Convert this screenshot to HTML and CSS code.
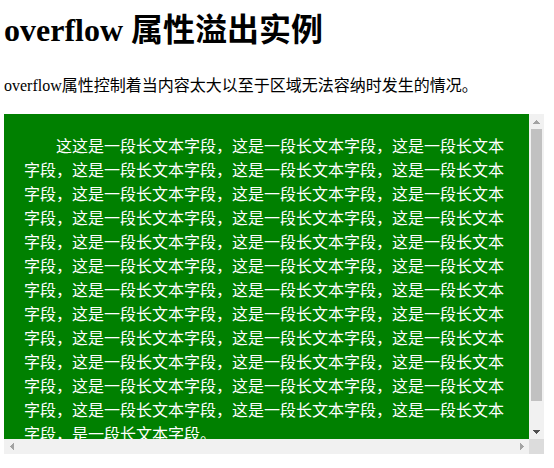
FILE: index.html
```html
<!DOCTYPE html>
<html lang="zh">
<head>
<meta charset="utf-8">
<title>overflow 属性溢出实例</title>
<link rel="stylesheet" href="styles.css">
</head>
<body>
<h1 class="title">overflow 属性溢出实例</h1>
<p class="intro">overflow属性控制着当内容太大以至于区域无法容纳时发生的情况。</p>
<div class="scroll-frame">
  <div class="scroll-content">这这是一段长文本字段，这是一段长文本字段，这是一段长文本字段，这是一段长文本字段，这是一段长文本字段，这是一段长文本字段，这是一段长文本字段，这是一段长文本字段，这是一段长文本字段，这是一段长文本字段，这是一段长文本字段，这是一段长文本字段，这是一段长文本字段，这是一段长文本字段，这是一段长文本字段，这是一段长文本字段，这是一段长文本字段，这是一段长文本字段，这是一段长文本字段，这是一段长文本字段，这是一段长文本字段，这是一段长文本字段，这是一段长文本字段，这是一段长文本字段，这是一段长文本字段，这是一段长文本字段，这是一段长文本字段，这是一段长文本字段，这是一段长文本字段，这是一段长文本字段，这是一段长文本字段，这是一段长文本字段，这是一段长文本字段，这是一段长文本字段，这是一段长文本字段，这是一段长文本字段，是一段长文本字段。</div>
  <div class="vbar">
    <span class="sb-btn arrow-up"></span>
    <div class="sb-track"><div class="sb-thumb"></div></div>
    <span class="sb-btn arrow-down"></span>
  </div>
  <div class="hbar">
    <span class="sb-btn arrow-left"></span>
    <div class="sb-track"></div>
    <span class="sb-btn arrow-right"></span>
  </div>
  <div class="sb-corner"></div>
</div>
</body>
</html>
```
FILE: styles.css
```css
body {
  margin: 10px 4px 0;
  font-family: "Liberation Serif", "Noto Sans CJK SC", serif;
  font-size: 16px;
  color: #000;
  background: #fff;
}

.title {
  margin: 0 0 26px;
  font-size: 32px;
  line-height: 40px;
  font-weight: bold;
}

.intro {
  margin: 0 0 18px;
  line-height: 20px;
}

.scroll-frame {
  display: grid;
  grid-template-columns: 525px 15px;
  grid-template-rows: 325px 15px;
  width: 540px;
  height: 340px;
}

.scroll-content {
  box-sizing: border-box;
  padding: 21px 20px 20px;
  background: #008000;
  color: #fff;
  line-height: 24px;
  text-indent: 2em;
  overflow: hidden;
}

.vbar,
.hbar {
  display: flex;
  background: #f1f1f1;
}

.vbar {
  flex-direction: column;
}

.sb-btn {
  flex: none;
  width: 15px;
  height: 15px;
  background-repeat: no-repeat;
  background-position: center;
}

.sb-track {
  flex: 1;
  display: flex;
  flex-direction: column;
}

.sb-thumb {
  height: 272px;
  margin: 0 2px;
  background: #c1c1c1;
}

.sb-corner {
  background: #dcdcdc;
}

.arrow-up,
.arrow-down {
  background-size: 7px 4px;
}

.arrow-left,
.arrow-right {
  background-size: 4px 7px;
}

.arrow-up {
  background-image: conic-gradient(from 138.8deg at 50% 0, #a3a3a3 0 82.4deg, transparent 0);
}

.arrow-down {
  background-image: conic-gradient(from -41.2deg at 50% 100%, #505050 0 82.4deg, transparent 0);
}

.arrow-left {
  background-image: conic-gradient(from 48.8deg at 0 50%, #a3a3a3 0 82.4deg, transparent 0);
}

.arrow-right {
  background-image: conic-gradient(from 228.8deg at 100% 50%, #a3a3a3 0 82.4deg, transparent 0);
}
```
